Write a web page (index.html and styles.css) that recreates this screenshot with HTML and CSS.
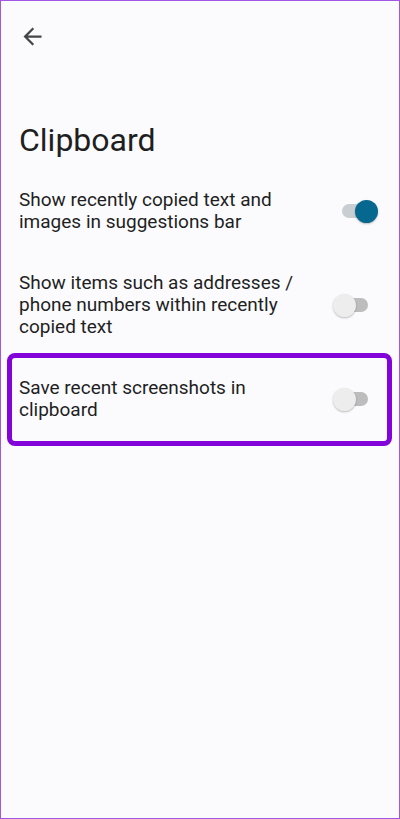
FILE: index.html
```html
<!doctype html>
<html>
  <head>
    <meta http-equiv="content-type" content="text/html; charset=UTF-8">
    <meta name="viewport" content="width=device-width, initial-scale=1">
    <title>Clipboard</title>
    <link rel="stylesheet" href="styles.css">
  </head>

  <body>
    <div class="screen">
      <div class="header">
        <svg class="backBtn" viewBox="0 0 24 24" title="Back">
          <path d="M20 11H7.83l5.59-5.59L12 4l-8 8 8 8 1.41-1.41L7.83 13H20v-2z"></path>
        </svg>
      </div>

      <h1 class="title">Clipboard</h1>

      <ul class="settings">
        <li class="row">
          <span class="label">Show recently copied text and images in suggestions bar</span>
          <div class="toggle on">
            <div class="track"></div>
            <div class="thumb"></div>
          </div>
        </li>
        <li class="row">
          <span class="label">Show items such as addresses / phone numbers within recently copied text</span>
          <div class="toggle">
            <div class="track"></div>
            <div class="thumb"></div>
          </div>
        </li>
        <li class="row marked">
          <span class="label">Save recent screenshots in clipboard</span>
          <div class="toggle">
            <div class="track"></div>
            <div class="thumb"></div>
          </div>
        </li>
      </ul>
    </div>
  </body>

</html>
```

FILE: styles.css
```css
body {
  margin: 0;
  font-family: Roboto, "Noto Sans", sans-serif;
  color: #1f1f1f;
}

ul {
  list-style-type: none;
  padding: 0;
  margin: 0;
}

.screen {
  box-sizing: border-box;
  height: 819px;
  border: 1px solid #a256e6;
  background-color: #fbfbfe;
}

.header {
  padding: 21.5px 0 0 17.5px;
  height: 27px;
}

.backBtn {
  width: 27px;
  height: 27px;
  fill: #444746;
  display: block;
}

.title {
  margin: 72px 0 12px 18px;
  font-size: 32px;
  line-height: 36px;
  font-weight: 400;
}

.row {
  display: flex;
  align-items: center;
  padding: 19.5px 21px 19.5px 18px;
  font-size: 19px;
  line-height: 22px;
}

.row > .label {
  flex: 1;
  padding-right: 30px;
}

.marked {
  margin: 0 12px 0 11px;
  padding-left: 7px;
  padding-right: 9px;
  outline: 5px solid #8204d8;
  border-radius: 3px;
}

.toggle {
  position: relative;
  width: 45px;
  height: 23px;
  flex-shrink: 0;
}

.toggle > .track {
  position: absolute;
  left: 9px;
  top: 4.5px;
  width: 26px;
  height: 14px;
  border-radius: 7px;
  background-color: #bdbdbd;
}

.toggle > .thumb {
  position: absolute;
  left: 0;
  top: 0;
  width: 23px;
  height: 23px;
  border-radius: 50%;
  background-color: #ededed;
  box-shadow: 0 1px 2px rgba(0,0,0,0.25);
}

.toggle.on > .track {
  background-color: #c9ced3;
}

.toggle.on > .thumb {
  left: 22px;
  background-color: #06678f;
}
```
